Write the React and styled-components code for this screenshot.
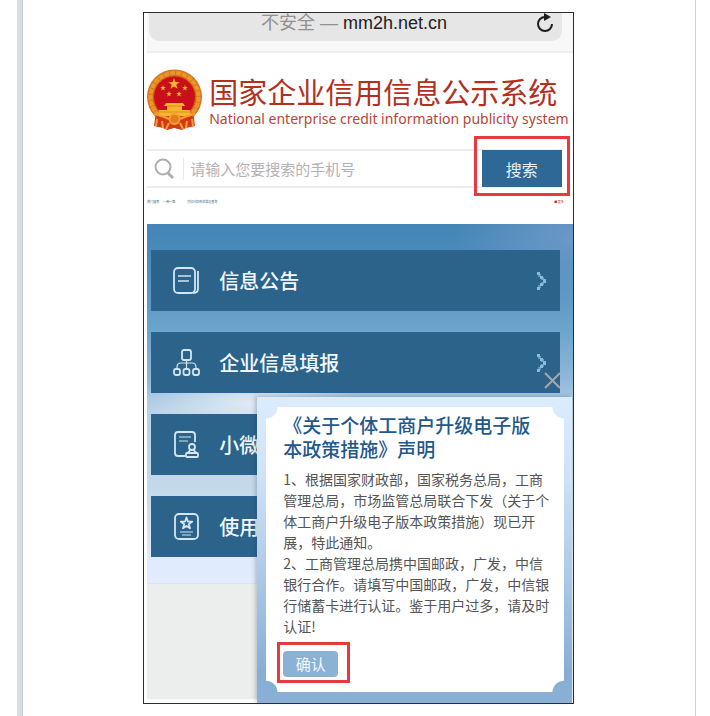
import styled, { createGlobalStyle } from "styled-components";

const GlobalStyle = createGlobalStyle`
  * {
    box-sizing: border-box;
  }

  body {
    margin: 0;
    background: #fff;
    font-family: "Noto Sans CJK SC", "Noto Sans", sans-serif;
  }

  h1, h2, p, ul {
    margin: 0;
    padding: 0;
    font-weight: 400;
  }

  button, input {
    font-family: inherit;
    border: 0;
    padding: 0;
  }
`;

const Sheet = styled.div`
  min-height: 100vh;
  margin: 0 14px 0 17px;
  padding: 12px 0;
  border-left: 5px solid #dadddf;
  border-right: 1px solid #d2d2d2;
  box-shadow: inset 1px 0 #c3ccd6;
`;

const Phone = styled.main`
  position: relative;
  width: 64%;
  margin: 0 auto;
  padding: 0 0 4px 3px;
  border: 1px solid #2c2c2e;
`;

const AddressBar = styled.div`
  padding: 0 11px 10px 2px;
  background: #f8f8f8;
  border-bottom: 2px solid #eeeeef;
`;

const Address = styled.div`
  display: grid;
  grid-template-columns: 24px 1fr 20px;
  align-items: start;
  height: 28px;
  padding-right: 7px;
  border-radius: 0 0 10px 10px;
  background: #e6e6e6;
`;

const Url = styled.p`
  color: #222;
  font-family: "Liberation Sans", "Noto Sans CJK SC", sans-serif;
  font-size: 18px;
  line-height: 20px;
  text-align: center;
`;

const Insecure = styled.span`
  color: #919191;
`;

const IconButton = styled.button`
  display: flex;
  background: none;
  cursor: pointer;
`;

const Header = styled.header`
  display: flex;
  align-items: center;
  gap: 7px;
  padding: 16px 0 18px;

  svg {
    flex-shrink: 0;
  }
`;

const SiteTitle = styled.h1`
  color: #b3301f;
  font-size: 29px;
  line-height: 37px;
  white-space: nowrap;
`;

const SiteSubtitle = styled.p`
  color: #b84636;
  font-family: "Noto Sans", sans-serif;
  font-size: 14px;
  line-height: 17px;
  white-space: nowrap;
`;

const SearchForm = styled.form`
  display: flex;
  align-items: center;
  height: 39px;
  margin-right: 11px;
  border-top: 2px solid #ededf0;
  border-bottom: 2px solid #ededf0;
`;

const SearchLabel = styled.label`
  display: flex;
  padding: 0 8px 0 6px;
  border-right: 1px solid #ebe8ee;
`;

const SearchInput = styled.input`
  flex: 1;
  min-width: 0;
  padding-left: 6px;
  background: none;
  color: #555;
  font-size: 15px;
  line-height: 24px;

  &::placeholder {
    color: #b5b0b5;
    opacity: 1;
  }
`;

const Marked = styled.div`
  position: relative;

  &::after {
    content: "";
    position: absolute;
    inset: ${(props) => props.$inset};
    border: 3px solid #e8393d;
    pointer-events: none;
  }
`;

const SearchButton = styled.button`
  display: block;
  width: 80px;
  height: 37px;
  background: #2d6896;
  color: #e9f2f8;
  font-size: 16px;
  cursor: pointer;
`;

const HotWords = styled.nav`
  display: flex;
  gap: 4px;
  height: 36px;
  padding: 11px 9px 0 0;
  font-size: 3px;
  line-height: 6px;
`;

const HotLink = styled.a`
  color: ${(props) => (props.$red ? "#a5303a" : "#2d6680")};
  text-decoration: none;
  margin-left: ${(props) => props.$push || "0"};
`;

const Sky = styled.section`
  padding: 26px 13px 26px 4px;
  background:
    radial-gradient(ellipse 110px 34px at 24% 50%, #dfeaf4 0%, transparent 100%),
    radial-gradient(ellipse 120px 70px at 100% 4%, #6c98c8 0%, transparent 100%),
    linear-gradient(#4385b6 0%, #4b8cbb 10%, #6ba4cb 29%, #8fb7da 43%, #b6d1e8 52%, #c4daeb 74%, #dfeafd 92%, #e2ecfe 100%);
`;

const Menu = styled.ul`
  display: grid;
  gap: 21px;
  list-style: none;
`;

const MenuLink = styled.a`
  display: flex;
  align-items: center;
  gap: 18px;
  height: 61px;
  padding: 0 12px 0 20px;
  border: 1px solid #2b6494;
  background: #2c638b;
  color: #f2f8fc;
  font-size: 20px;
  font-weight: 500;
  text-decoration: none;
`;

const MenuText = styled.span`
  flex: 1;
`;

const Footer = styled.footer`
  height: 116px;
  border-top: 1px solid #e0e4ee;
  background: #eceeed;
`;

const Popup = styled.section`
  position: absolute;
  left: 113px;
  right: 1px;
  bottom: 0;
  padding: 10px 8px 11px 9px;
  background: linear-gradient(#dcecfd 0%, #cfe2f8 25%, #abc8e6 60%, #86aed4 90%, #8ab0d8 100%);
  box-shadow: -2px -1px 4px rgba(40, 60, 90, 0.25);
`;

const notch = (corner) =>
  `radial-gradient(circle at ${corner}, transparent 11px, #fff 12px) ${corner} / 51% 51% no-repeat`;

const Notice = styled.div`
  padding: 6px 13px 15px 17px;
  background: ${["top left", "top right", "bottom left", "bottom right"].map(notch).join(", ")};
`;

const NoticeTitle = styled.h2`
  padding-right: 16px;
  color: #24588a;
  font-size: 19px;
  font-weight: 500;
  line-height: 24px;
`;

const NoticeBody = styled.div`
  margin: 8px 0 14px;
  color: #555;
  font-size: 14px;
  line-height: 21px;
`;

const Confirm = styled.button`
  display: block;
  width: 55px;
  height: 26px;
  border-radius: 4px;
  background: #8bb1d5;
  color: #f4f9fd;
  font-size: 15px;
  line-height: 24px;
  cursor: pointer;
`;

const Actions = styled(Marked)`
  width: fit-content;
`;

const CloseButton = styled(IconButton)`
  position: absolute;
  right: 10px;
  bottom: 100%;
  margin-bottom: 7px;
`;

const star = (x, y, r) =>
  Array.from({ length: 10 }, (_, i) => {
    const radius = i % 2 ? r * 0.4 : r;
    const angle = (Math.PI / 5) * i - Math.PI / 2;
    return `${x + radius * Math.cos(angle)},${y + radius * Math.sin(angle)}`;
  }).join(" ");

const Emblem = () => (
  <svg width="55" height="62" viewBox="0 0 55 62" role="img" aria-label="国徽">
    <path d="M9 42 L7 57 L16 59 L20 61 L27 59 L35 61 L39 59 L48 57 L46 42Z" fill="#d2381a" />
    <circle cx="27.500" cy="28" r="27.500" fill="#d9751b" />
    <circle cx="27.500" cy="28" r="24" fill="none" stroke="#e9962a" strokeWidth="4" strokeDasharray="5 1" />
    <circle cx="27.500" cy="28" r="21" fill="#c90f1a" stroke="#d95b16" />
    <g fill="#f7b72d">
      <polygon points={star(27, 15, 6)} />
      <polygon points={star(16, 19, 3)} />
      <polygon points={star(38, 19, 3)} />
      <polygon points={star(22, 25, 3)} />
      <polygon points={star(32, 25, 3)} />
      <path d="M19 34h17l2 3h-3v4h8v6H12v-6h8v-4h-3z" />
    </g>
    <path d="M20 37h15M12 43h31" stroke="#e58b21" />
    <path d="M8 45 Q27 55 47 45 L44 52 Q27 58 11 52Z" fill="#d8331c" />
    <g fill="none" stroke="#f0a12a" strokeWidth="2">
      <circle cx="27.500" cy="50" r="5" fill="#e57b20" />
      <path d="M7 45Q16 47 22 50M48 45Q39 47 33 50M10 50l-1 7M45 50l1 7M15 52l1 7M40 52l-1 7M22 54l-3 6M33 54l3 6" />
    </g>
  </svg>
);

const ReloadIcon = () => (
  <svg width="20" height="21" viewBox="0 0 20 21" fill="none" stroke="#1d1d1d" strokeWidth="2">
    <path d="M11 4H10A7 7 0 1 0 17 11" />
    <path d="M9 0l7 4-7 4z" fill="#1d1d1d" stroke="none" />
  </svg>
);

const SearchIcon = () => (
  <svg width="22" height="22" viewBox="0 0 22 22" fill="none" stroke="#b0aeb3" strokeWidth="2">
    <circle cx="10" cy="9" r="7.500" />
    <path d="M15 15l5 5" strokeWidth="3" />
  </svg>
);

const menuIcons = {
  notice: (
    <>
      <rect x="2" y="2" width="21" height="25" rx="4" />
      <path d="M26 5v18q0 4-5 4" />
      <path d="M6 10h13M6 15h11" strokeWidth="1.300" />
    </>
  ),
  company: (
    <>
      <rect x="10" y="2" width="9" height="10" rx="2" />
      <path d="M14.500 12v9M5 21v-2q0-4 4-4h11q4 0 4 4v2" strokeWidth="1.200" />
      <rect x="2" y="21" width="6" height="6" rx="2" />
      <rect x="11.500" y="21" width="6" height="6" rx="2" />
      <rect x="21" y="21" width="6" height="6" rx="2" />
    </>
  ),
  stamp: (
    <>
      <path d="M13 26H6q-3 0-3-3V5q0-3 3-3h14q3 0 3 3v7" />
      <path d="M7 7h12M7 11h9" strokeWidth="1.200" />
      <circle cx="20" cy="17" r="3" />
      <path d="M18 19q0 3-3 4h10q-3-1-3-4" />
      <rect x="14" y="23" width="12" height="4" rx="1" />
    </>
  ),
  guide: (
    <>
      <rect x="3" y="2" width="23" height="25" rx="4" />
      <polygon points={star(14.5, 11.5, 6)} />
      <path d="M8 20h13M10 23h9" strokeWidth="1.200" />
    </>
  ),
};

const MenuIcon = ({ name }) => (
  <svg width="29" height="29" viewBox="0 0 29 29" fill="none" stroke="#d3e5f0" strokeWidth="1.800" strokeLinejoin="round">
    {menuIcons[name]}
  </svg>
);

const Chevron = () => (
  <svg width="10" height="20" viewBox="0 0 10 20" fill="#8abbd9">
    <path d="M0 1h3v3H0zM3 5h3v3H3zM6 8h3v4H6zM3 12h3v3H3zM0 16h3v3H0z" />
    <path d="M1 3h3v3H1zM4 6h3v3H4zM4 11h3v3H4zM1 14h3v3H1z" opacity="0.6" />
  </svg>
);

const CloseIcon = () => (
  <svg width="19" height="19" viewBox="0 0 19 19" stroke="#a5a7a9" strokeWidth="2">
    <path d="M2 2l15 15M17 2L2 17" />
  </svg>
);

const menu = [
  { icon: "notice", text: "信息公告" },
  { icon: "company", text: "企业信息填报" },
  { icon: "stamp", text: "小微" },
  { icon: "guide", text: "使用" },
];

const App = () => {
  return (
    <>
      <GlobalStyle />
      <Sheet>
        <Phone>
          <AddressBar>
            <Address>
              <span />
              <Url>
                <Insecure>不安全 —</Insecure> mm2h.net.cn
              </Url>
              <IconButton type="button" aria-label="刷新">
                <ReloadIcon />
              </IconButton>
            </Address>
          </AddressBar>
          <Header>
            <Emblem />
            <div>
              <SiteTitle>国家企业信用信息公示系统</SiteTitle>
              <SiteSubtitle>National enterprise credit information publicity system</SiteSubtitle>
            </div>
          </Header>
          <SearchForm onSubmit={(e) => e.preventDefault()}>
            <SearchLabel htmlFor="keyword" aria-label="搜索">
              <SearchIcon />
            </SearchLabel>
            <SearchInput id="keyword" type="text" placeholder="请输入您要搜索的手机号" />
            <Marked $inset="-14px -8px -9px -8px">
              <SearchButton type="submit">搜索</SearchButton>
            </Marked>
          </SearchForm>
          <HotWords>
            <HotLink href="#hot">热门搜索</HotLink>
            <HotLink href="#road">一带一路</HotLink>
            <HotLink href="#print" $push="8px">打印代码附近信息查询</HotLink>
            <HotLink href="#more" $red $push="auto">■ 更多</HotLink>
          </HotWords>
          <Sky>
            <Menu>
              {menu.map((item) => (
                <li key={item.icon}>
                  <MenuLink href={`#${item.icon}`}>
                    <MenuIcon name={item.icon} />
                    <MenuText>{item.text}</MenuText>
                    <Chevron />
                  </MenuLink>
                </li>
              ))}
            </Menu>
          </Sky>
          <Footer />
          <Popup role="dialog" aria-labelledby="notice-title">
            <CloseButton type="button" aria-label="关闭">
              <CloseIcon />
            </CloseButton>
            <Notice>
              <NoticeTitle id="notice-title">《关于个体工商户升级电子版本政策措施》声明</NoticeTitle>
              <NoticeBody>
                <p>1、根据国家财政部，国家税务总局，工商管理总局，市场监管总局联合下发（关于个体工商户升级电子版本政策措施）现已开展，特此通知。</p>
                <p>2、工商管理总局携中国邮政，广发，中信银行合作。请填写中国邮政，广发，中信银行储蓄卡进行认证。鉴于用户过多，请及时认证!</p>
              </NoticeBody>
              <Actions $inset="-9px -12px -6px -6px">
                <Confirm type="button">确认</Confirm>
              </Actions>
            </Notice>
          </Popup>
        </Phone>
      </Sheet>
    </>
  );
};

export default App;
